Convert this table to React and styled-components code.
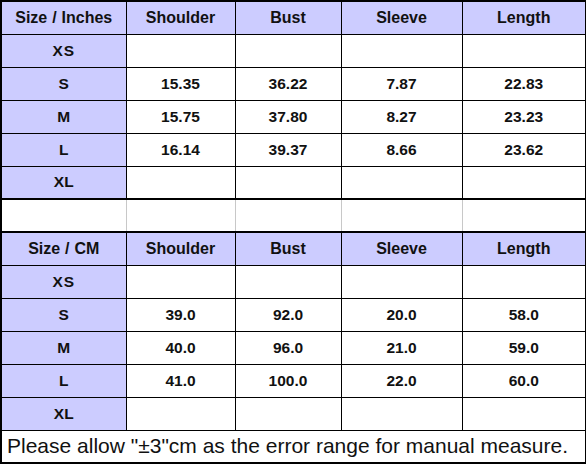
import React from "react";
import styled, { createGlobalStyle } from "styled-components";

const Global = createGlobalStyle`
  html, body { margin: 0; padding: 0; background: #fff; }
  body { font-family: "Liberation Sans", Arial, sans-serif; color: #111; }
`;

const Table = styled.table`
  border-collapse: collapse;
  table-layout: fixed;
  width: 585px;
  border: 2px solid #000;
`;

const Row = styled.tr`
  height: 33px;
`;

const Cell = styled.td`
  border: 1px solid #000;
  padding: 0;
  text-align: center;
  vertical-align: middle;
  font-weight: bold;
  font-size: 15.5px;
  background: ${(p) => (p.$head ? "#ccccff" : "#fff")};
  letter-spacing: ${(p) => (p.$wide ? "1px" : "0")};
`;

const HeadCell = styled(Cell)`
  font-size: 16px;
  word-spacing: 0.5px;
`;

const GapCell = styled.td`
  padding: 0;
  border-top: 2px solid #000;
  border-bottom: 2px solid #000;
  border-left: 1px solid #c8c8c8;
  border-right: 1px solid #c8c8c8;
  &:first-child { border-left: 2px solid #000; }
  &:last-child { border-right: 2px solid #000; }
`;

const NoteCell = styled.td`
  border: 1px solid #000;
  padding: 0 0 0 5px;
  text-align: left;
  font-size: 21px;
  font-weight: normal;
  white-space: nowrap;
`;

const cols = [125, 109, 106, 121, 124];
const sizes = ["XS", "S", "M", "L", "XL"];
const inches = {
  S: ["15.35", "36.22", "7.87", "22.83"],
  M: ["15.75", "37.80", "8.27", "23.23"],
  L: ["16.14", "39.37", "8.66", "23.62"],
};
const cm = {
  S: ["39.0", "92.0", "20.0", "58.0"],
  M: ["40.0", "96.0", "21.0", "59.0"],
  L: ["41.0", "100.0", "22.0", "60.0"],
};
const heads = ["Shoulder", "Bust", "Sleeve", "Length"];

function Section({ title, data }) {
  return (
    <>
      <Row>
        <HeadCell $head>{title}</HeadCell>
        {heads.map((h) => (
          <HeadCell $head key={h}>{h}</HeadCell>
        ))}
      </Row>
      {sizes.map((s) => (
        <Row key={s}>
          <Cell $head $wide={s === "XS"}>{s}</Cell>
          {(data[s] || ["", "", "", ""]).map((v, i) => (
            <Cell key={i}>{v}</Cell>
          ))}
        </Row>
      ))}
    </>
  );
}

export default function App() {
  return (
    <>
      <Global />
      <Table>
        <colgroup>
          {cols.map((w, i) => (
            <col key={i} style={{ width: w }} />
          ))}
        </colgroup>
        <tbody>
          <Section title="Size / Inches" data={inches} />
          <Row>
            {cols.map((_, i) => (
              <GapCell key={i} />
            ))}
          </Row>
          <Section title="Size / CM" data={cm} />
          <Row>
            <NoteCell colSpan={5}>
              Please allow "±3"cm as the error range for manual measure.
            </NoteCell>
          </Row>
        </tbody>
      </Table>
    </>
  );
}
